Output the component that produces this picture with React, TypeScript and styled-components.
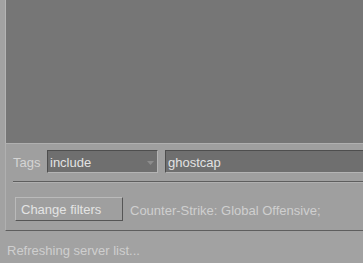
import React from "react";
import styled, { createGlobalStyle } from "styled-components";

const Global = createGlobalStyle`
  html, body { margin: 0; padding: 0; background: #a2a2a2; }
  body { font-family: "Liberation Sans", Arial, sans-serif; }
`;

const Window = styled.div`
  width: 363px;
  height: 263px;
  overflow: hidden;
  background: #a2a2a2;
  display: flex;
  flex-direction: column;
  padding-left: 5px;
  box-sizing: border-box;
`;

const ServerList = styled.div`
  height: 143px;
  width: 420px;
  flex: none;
  background: #767676;
  border-left: 1px solid #b4b4b4;
  box-sizing: border-box;
`;

const FilterPanel = styled.div`
  width: 420px;
  height: 88px;
  flex: none;
  box-sizing: border-box;
  background: #9f9f9f;
  border-left: 1px solid #b0b0b0;
  border-top: 1px solid #b0b0b0;
  border-bottom: 1px solid #5e5e5e;
  padding: 6px 0 0 7px;
  display: flex;
  flex-direction: column;
`;

const TagsRow = styled.div`
  display: flex;
  align-items: center;
  height: 23px;
`;

const Label = styled.span`
  color: #d4d4d4;
  font-size: 13px;
  width: 34px;
  flex: none;
  padding-top: 2px;
`;

const Sunken = styled.div<{ $w: number }>`
  width: ${(p) => p.$w}px;
  height: 23px;
  flex: none;
  box-sizing: border-box;
  background: #6f6f6f;
  border-top: 1px solid #4e4e4e;
  border-left: 1px solid #4e4e4e;
  border-bottom: 1px solid #b4b4b4;
  border-right: 1px solid #b4b4b4;
  display: flex;
  align-items: center;
  padding: 2px 0 0 2px;
  color: #e2e2e2;
  font-size: 13px;
  position: relative;
`;

const Arrow = styled.svg`
  position: absolute;
  right: 3px;
  top: 10px;
`;

const Gap = styled.div<{ $w: number }>`
  width: ${(p) => p.$w}px;
  flex: none;
`;

const Separator = styled.div`
  margin: 8px 0 0 0;
  height: 1px;
  background: #5e5e5e;
  border-bottom: 1px solid #b0b0b0;
`;

const ButtonRow = styled.div`
  display: flex;
  align-items: center;
  margin: 14px 0 0 2px;
  gap: 7px;
`;

const Button = styled.button`
  width: 108px;
  height: 24px;
  box-sizing: border-box;
  background: #9f9f9f;
  border-top: 1px solid #bababa;
  border-left: 1px solid #bababa;
  border-bottom: 1px solid #555555;
  border-right: 1px solid #555555;
  color: #e4e4e4;
  font-family: "Liberation Sans", Arial, sans-serif;
  font-size: 13px;
  text-align: left;
  padding: 1px 0 0 5px;
`;

const Info = styled.span`
  color: #cfcfcf;
  font-size: 13px;
  padding-top: 2px;
`;

const Status = styled.div`
  color: #cfcfcf;
  font-size: 13px;
  padding: 12px 0 0 2px;
`;

export default function App() {
  return (
    <>
      <Global />
      <Window>
        <ServerList />
        <FilterPanel>
          <TagsRow>
            <Label>Tags</Label>
            <Sunken $w={111}>
              include
              <Arrow width="7" height="4" viewBox="0 0 7 4">
                <path d="M0 0 H7 L3.5 4 Z" fill="#8c8c8c" />
              </Arrow>
            </Sunken>
            <Gap $w={7} />
            <Sunken $w={260}>ghostcap</Sunken>
          </TagsRow>
          <Separator />
          <ButtonRow>
            <Button>Change filters</Button>
            <Info>Counter-Strike: Global Offensive;</Info>
          </ButtonRow>
        </FilterPanel>
        <Status>Refreshing server list...</Status>
      </Window>
    </>
  );
}
